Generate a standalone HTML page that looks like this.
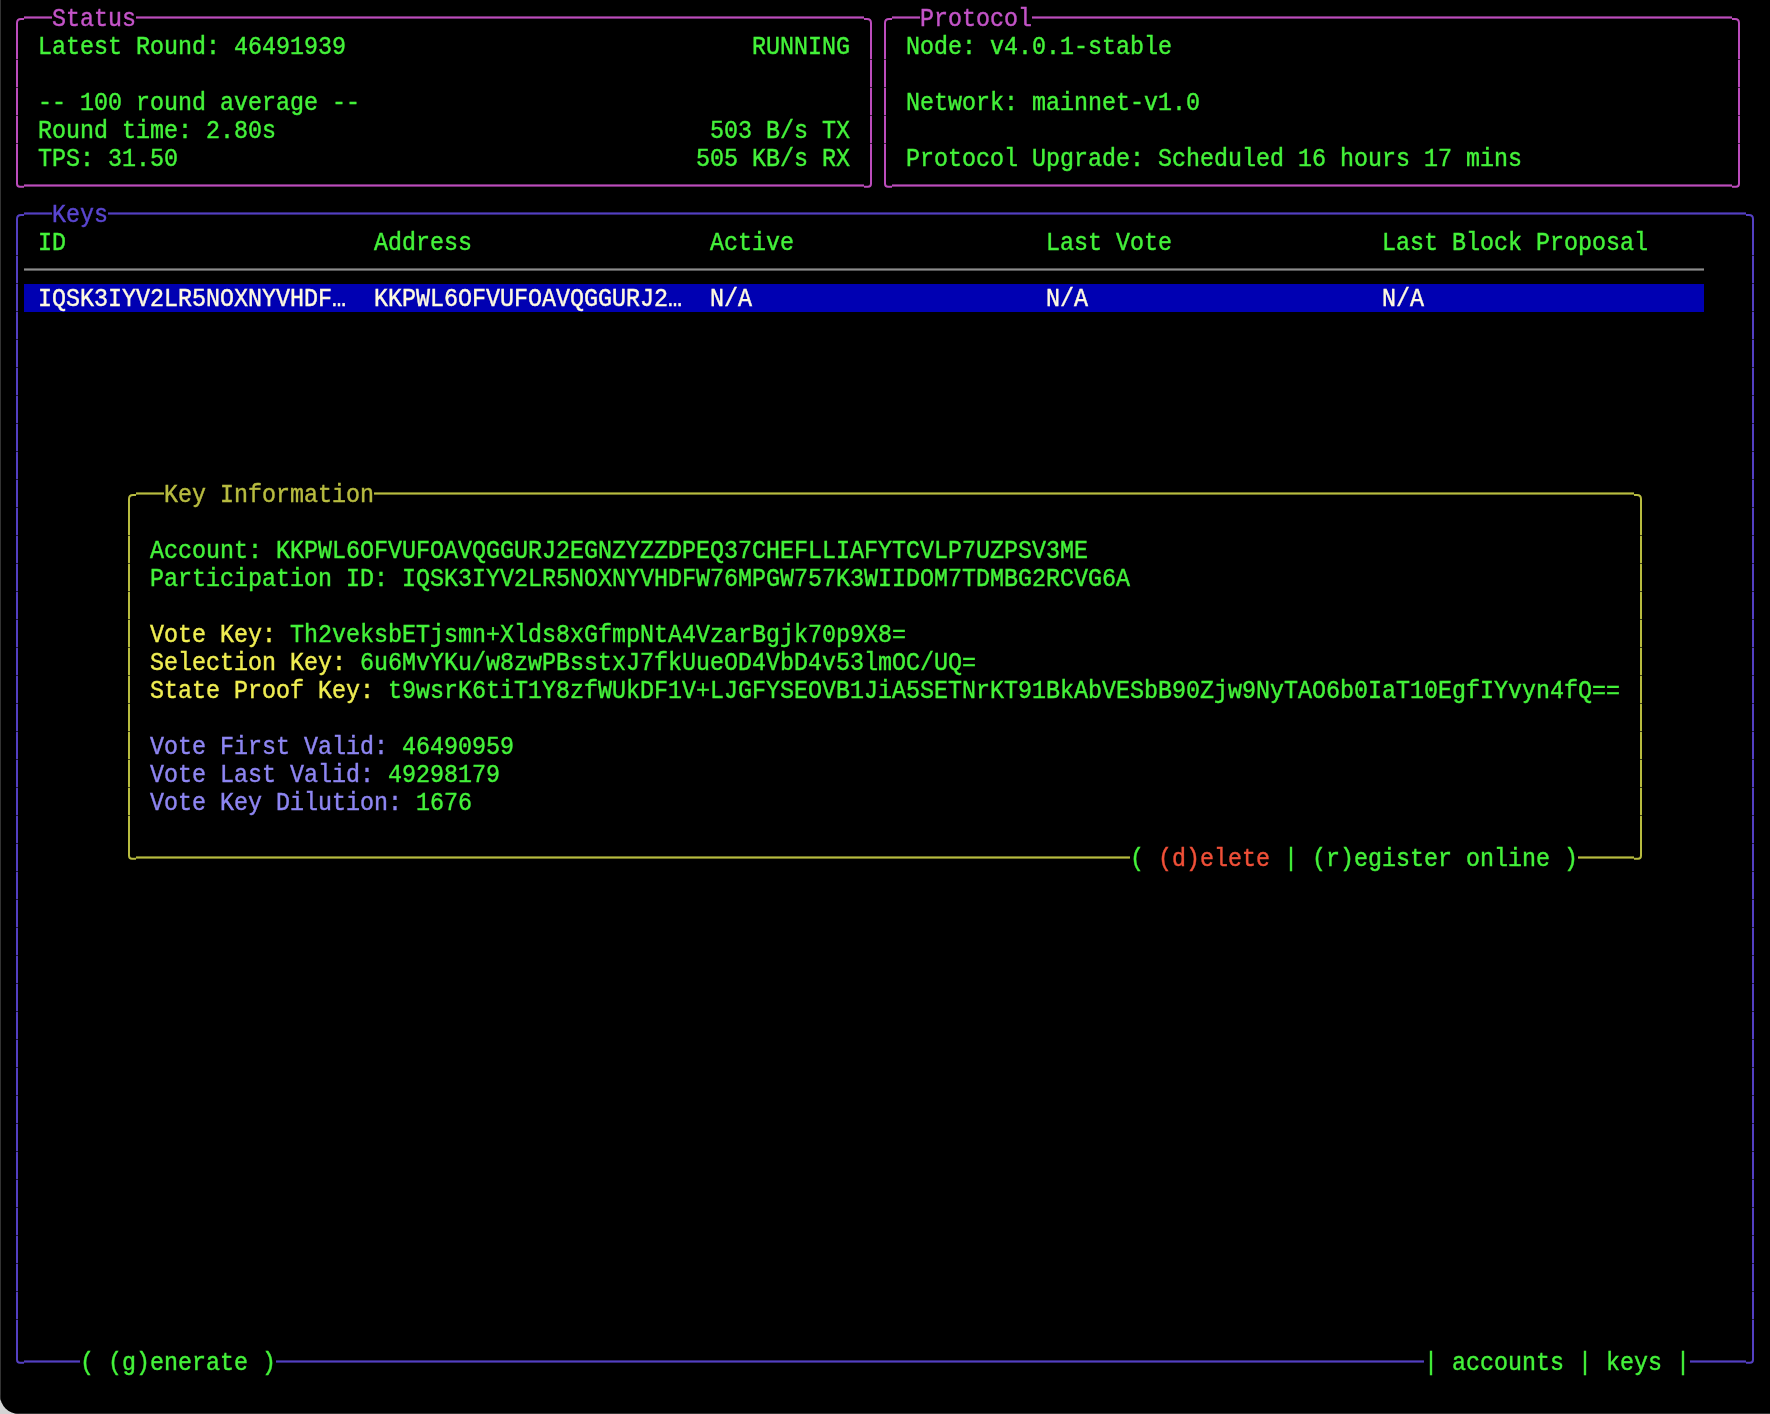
<!DOCTYPE html>
<html><head><meta charset="utf-8"><style>
html,body{margin:0;padding:0;}
body{width:1770px;height:1414px;overflow:hidden;background:#d4d4d4;position:relative;}
#win{position:absolute;left:0;top:0;width:1770px;height:1414px;background:#000;border-bottom-left-radius:19px;overflow:hidden;}
#ls{position:absolute;left:0;top:0;width:1px;height:1414px;background:#333;}
#bs{position:absolute;left:0;bottom:0;width:1770px;height:1px;background:#333;}
.t{position:absolute;white-space:pre;font-family:"Liberation Mono",monospace;font-size:23.33px;line-height:28px;height:28px;}
.l{position:absolute;display:block;}
.v{background:repeating-linear-gradient(currentColor 0,currentColor 27px,transparent 27px,transparent 28px);}
.v::before{content:'';position:absolute;left:0;right:0;top:0;bottom:0;background:currentColor;opacity:.35;}
.h{height:3px;background:linear-gradient(currentColor,currentColor) 0 1px/100% 1px no-repeat;}
.h::before{content:'';position:absolute;left:0;right:0;top:0;bottom:0;background:currentColor;opacity:.6;}
.t{transform:scaleY(1.07);transform-origin:0 20px;will-change:transform;-webkit-text-stroke-width:0.4px;}
</style></head><body><div id="win"><div id="ls"></div><div id="bs"></div>
<svg class="l" style="left:10px;top:4px;overflow:visible" width="14" height="28" viewBox="0 0 14 28"><path d="M7 28 L7 19 Q7 15 11 15 L14 15" fill="none" stroke="#bc4cbc" stroke-width="2"/></svg>
<svg class="l" style="left:864px;top:4px;overflow:visible" width="14" height="28" viewBox="0 0 14 28"><path d="M0 15 L3 15 Q7 15 7 19 L7 28" fill="none" stroke="#bc4cbc" stroke-width="2"/></svg>
<svg class="l" style="left:10px;top:172px;overflow:visible" width="14" height="28" viewBox="0 0 14 28"><path d="M7 -1.5 L7 11.7 Q7 14.7 10 14.7 L14 14.7" fill="none" stroke="#bc4cbc" stroke-width="2"/></svg>
<svg class="l" style="left:864px;top:172px;overflow:visible" width="14" height="28" viewBox="0 0 14 28"><path d="M0 14.7 L4 14.7 Q7 14.7 7 11.7 L7 -1.5" fill="none" stroke="#bc4cbc" stroke-width="2"/></svg>
<div class="l v" style="left:16px;top:32px;width:2px;height:140px;color:#bc4cbc"></div>
<div class="l v" style="left:870px;top:32px;width:2px;height:140px;color:#bc4cbc"></div>
<div class="l h" style="left:24px;top:16px;width:28px;color:#bc4cbc"></div>
<div class="l h" style="left:136px;top:16px;width:728px;color:#bc4cbc"></div>
<div class="t" style="left:52px;top:6px"><span style="color:#c454c8">Status</span></div>
<div class="l h" style="left:24px;top:184px;width:840px;color:#bc4cbc"></div>
<div class="t" style="left:38px;top:34px"><span style="color:#44f23a">Latest Round: 46491939</span></div>
<div class="t" style="left:752px;top:34px"><span style="color:#44f23a">RUNNING</span></div>
<div class="t" style="left:38px;top:90px"><span style="color:#44f23a">-- 100 round average --</span></div>
<div class="t" style="left:38px;top:118px"><span style="color:#44f23a">Round time: 2.80s</span></div>
<div class="t" style="left:710px;top:118px"><span style="color:#44f23a">503 B/s TX</span></div>
<div class="t" style="left:38px;top:146px"><span style="color:#44f23a">TPS: 31.50</span></div>
<div class="t" style="left:696px;top:146px"><span style="color:#44f23a">505 KB/s RX</span></div>
<svg class="l" style="left:878px;top:4px;overflow:visible" width="14" height="28" viewBox="0 0 14 28"><path d="M7 28 L7 19 Q7 15 11 15 L14 15" fill="none" stroke="#bc4cbc" stroke-width="2"/></svg>
<svg class="l" style="left:1732px;top:4px;overflow:visible" width="14" height="28" viewBox="0 0 14 28"><path d="M0 15 L3 15 Q7 15 7 19 L7 28" fill="none" stroke="#bc4cbc" stroke-width="2"/></svg>
<svg class="l" style="left:878px;top:172px;overflow:visible" width="14" height="28" viewBox="0 0 14 28"><path d="M7 -1.5 L7 11.7 Q7 14.7 10 14.7 L14 14.7" fill="none" stroke="#bc4cbc" stroke-width="2"/></svg>
<svg class="l" style="left:1732px;top:172px;overflow:visible" width="14" height="28" viewBox="0 0 14 28"><path d="M0 14.7 L4 14.7 Q7 14.7 7 11.7 L7 -1.5" fill="none" stroke="#bc4cbc" stroke-width="2"/></svg>
<div class="l v" style="left:884px;top:32px;width:2px;height:140px;color:#bc4cbc"></div>
<div class="l v" style="left:1738px;top:32px;width:2px;height:140px;color:#bc4cbc"></div>
<div class="l h" style="left:892px;top:16px;width:28px;color:#bc4cbc"></div>
<div class="l h" style="left:1032px;top:16px;width:700px;color:#bc4cbc"></div>
<div class="t" style="left:920px;top:6px"><span style="color:#c454c8">Protocol</span></div>
<div class="l h" style="left:892px;top:184px;width:840px;color:#bc4cbc"></div>
<div class="t" style="left:906px;top:34px"><span style="color:#44f23a">Node: v4.0.1-stable</span></div>
<div class="t" style="left:906px;top:90px"><span style="color:#44f23a">Network: mainnet-v1.0</span></div>
<div class="t" style="left:906px;top:146px"><span style="color:#44f23a">Protocol Upgrade: Scheduled 16 hours 17 mins</span></div>
<svg class="l" style="left:10px;top:200px;overflow:visible" width="14" height="28" viewBox="0 0 14 28"><path d="M7 28 L7 19 Q7 15 11 15 L14 15" fill="none" stroke="#5440c2" stroke-width="2"/></svg>
<svg class="l" style="left:1746px;top:200px;overflow:visible" width="14" height="28" viewBox="0 0 14 28"><path d="M0 15 L3 15 Q7 15 7 19 L7 28" fill="none" stroke="#5440c2" stroke-width="2"/></svg>
<svg class="l" style="left:10px;top:1348px;overflow:visible" width="14" height="28" viewBox="0 0 14 28"><path d="M7 -1.5 L7 11.7 Q7 14.7 10 14.7 L14 14.7" fill="none" stroke="#5440c2" stroke-width="2"/></svg>
<svg class="l" style="left:1746px;top:1348px;overflow:visible" width="14" height="28" viewBox="0 0 14 28"><path d="M0 14.7 L4 14.7 Q7 14.7 7 11.7 L7 -1.5" fill="none" stroke="#5440c2" stroke-width="2"/></svg>
<div class="l v" style="left:16px;top:228px;width:2px;height:1120px;color:#5440c2"></div>
<div class="l v" style="left:1752px;top:228px;width:2px;height:1120px;color:#5440c2"></div>
<div class="l h" style="left:24px;top:212px;width:28px;color:#5440c2"></div>
<div class="l h" style="left:108px;top:212px;width:1638px;color:#5440c2"></div>
<div class="t" style="left:52px;top:202px"><span style="color:#5a46d0">Keys</span></div>
<div class="l h" style="left:24px;top:1360px;width:56px;color:#5440c2"></div>
<div class="t" style="left:80px;top:1350px"><span style="color:#44f23a">( (g)enerate )</span></div>
<div class="l h" style="left:276px;top:1360px;width:1148px;color:#5440c2"></div>
<div class="t" style="left:1424px;top:1350px"><span style="color:#44f23a">| accounts | keys |</span></div>
<div class="l h" style="left:1690px;top:1360px;width:56px;color:#5440c2"></div>
<div class="t" style="left:38px;top:230px"><span style="color:#44f23a">ID</span></div>
<div class="t" style="left:374px;top:230px"><span style="color:#44f23a">Address</span></div>
<div class="t" style="left:710px;top:230px"><span style="color:#44f23a">Active</span></div>
<div class="t" style="left:1046px;top:230px"><span style="color:#44f23a">Last Vote</span></div>
<div class="t" style="left:1382px;top:230px"><span style="color:#44f23a">Last Block Proposal</span></div>
<div class="l h" style="left:24px;top:268px;width:1680px;color:#8c8c8c"></div>
<div class="l" style="left:24px;top:284px;width:1680px;height:28px;background:#0000b2"></div>
<div class="t" style="left:38px;top:286px"><span style="color:#fffae0">IQSK3IYV2LR5NOXNYVHDF…</span></div>
<div class="t" style="left:374px;top:286px"><span style="color:#fffae0">KKPWL6OFVUFOAVQGGURJ2…</span></div>
<div class="t" style="left:710px;top:286px"><span style="color:#fffae0">N/A</span></div>
<div class="t" style="left:1046px;top:286px"><span style="color:#fffae0">N/A</span></div>
<div class="t" style="left:1382px;top:286px"><span style="color:#fffae0">N/A</span></div>
<svg class="l" style="left:122px;top:480px;overflow:visible" width="14" height="28" viewBox="0 0 14 28"><path d="M7 28 L7 19 Q7 15 11 15 L14 15" fill="none" stroke="#b8bc40" stroke-width="2"/></svg>
<svg class="l" style="left:1634px;top:480px;overflow:visible" width="14" height="28" viewBox="0 0 14 28"><path d="M0 15 L3 15 Q7 15 7 19 L7 28" fill="none" stroke="#b8bc40" stroke-width="2"/></svg>
<svg class="l" style="left:122px;top:844px;overflow:visible" width="14" height="28" viewBox="0 0 14 28"><path d="M7 -1.5 L7 11.7 Q7 14.7 10 14.7 L14 14.7" fill="none" stroke="#b8bc40" stroke-width="2"/></svg>
<svg class="l" style="left:1634px;top:844px;overflow:visible" width="14" height="28" viewBox="0 0 14 28"><path d="M0 14.7 L4 14.7 Q7 14.7 7 11.7 L7 -1.5" fill="none" stroke="#b8bc40" stroke-width="2"/></svg>
<div class="l v" style="left:128px;top:508px;width:2px;height:336px;color:#b8bc40"></div>
<div class="l v" style="left:1640px;top:508px;width:2px;height:336px;color:#b8bc40"></div>
<div class="l h" style="left:136px;top:492px;width:28px;color:#b8bc40"></div>
<div class="l h" style="left:374px;top:492px;width:1260px;color:#b8bc40"></div>
<div class="t" style="left:164px;top:482px"><span style="color:#b8bc40">Key Information</span></div>
<div class="l h" style="left:136px;top:856px;width:994px;color:#b8bc40"></div>
<div class="t" style="left:1130px;top:846px"><span style="color:#44f23a">( </span><span style="color:#f05038">(d)elete</span><span style="color:#44f23a"> | (r)egister online )</span></div>
<div class="l h" style="left:1578px;top:856px;width:56px;color:#b8bc40"></div>
<div class="t" style="left:150px;top:538px"><span style="color:#44f23a">Account: KKPWL6OFVUFOAVQGGURJ2EGNZYZZDPEQ37CHEFLLIAFYTCVLP7UZPSV3ME</span></div>
<div class="t" style="left:150px;top:566px"><span style="color:#44f23a">Participation ID: IQSK3IYV2LR5NOXNYVHDFW76MPGW757K3WIIDOM7TDMBG2RCVG6A</span></div>
<div class="t" style="left:150px;top:622px"><span style="color:#f0ee52">Vote Key: </span><span style="color:#44f23a">Th2veksbETjsmn+Xlds8xGfmpNtA4VzarBgjk70p9X8=</span></div>
<div class="t" style="left:150px;top:650px"><span style="color:#f0ee52">Selection Key: </span><span style="color:#44f23a">6u6MvYKu/w8zwPBsstxJ7fkUueOD4VbD4v53lmOC/UQ=</span></div>
<div class="t" style="left:150px;top:678px"><span style="color:#f0ee52">State Proof Key: </span><span style="color:#44f23a">t9wsrK6tiT1Y8zfWUkDF1V+LJGFYSEOVB1JiA5SETNrKT91BkAbVESbB90Zjw9NyTAO6b0IaT10EgfIYvyn4fQ==</span></div>
<div class="t" style="left:150px;top:734px"><span style="color:#8e86f2">Vote First Valid: </span><span style="color:#44f23a">46490959</span></div>
<div class="t" style="left:150px;top:762px"><span style="color:#8e86f2">Vote Last Valid: </span><span style="color:#44f23a">49298179</span></div>
<div class="t" style="left:150px;top:790px"><span style="color:#8e86f2">Vote Key Dilution: </span><span style="color:#44f23a">1676</span></div>
</div></body></html>
